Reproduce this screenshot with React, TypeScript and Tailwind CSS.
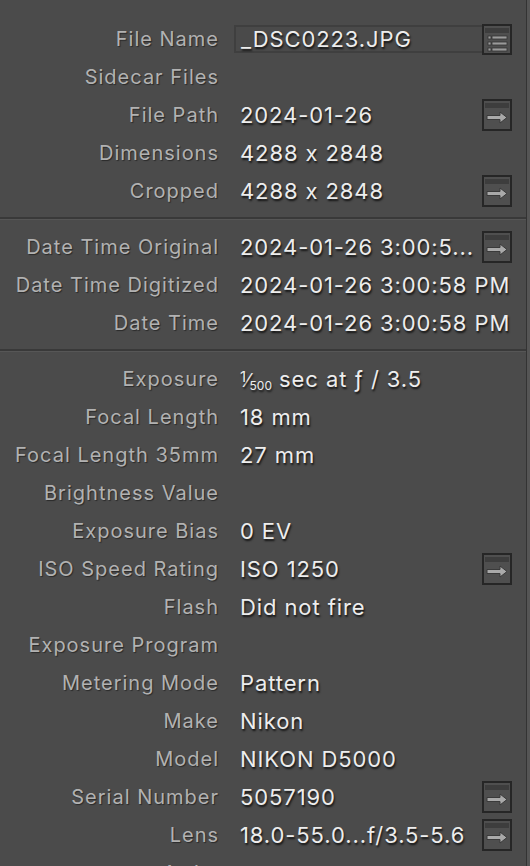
import React from "react";

const labelCls =
  "w-[219px] shrink-0 text-right text-[20px] tracking-[1px] text-[#b2b2b2] [text-shadow:1px_1px_1px_rgba(0,0,0,0.45)] whitespace-nowrap";
const valueCls =
  "ml-[21px] flex-1 min-w-0 whitespace-nowrap text-[22px] tracking-[0.9px] text-[#ededed] [text-shadow:1px_2px_2px_rgba(0,0,0,0.75)]";

function ArrowBtn() {
  return (
    <div className="w-[30px] h-[32px] shrink-0 border-2 border-[#262626] bg-[#4f4f4f] flex flex-col">
      <svg width="26" height="28" viewBox="0 0 26 28">
        <rect x="1" y="2" width="24" height="5" fill="#3d3d3d" />
        <path
          d="M3 14.5 H16 V11 L23 16.5 L16 22 V18.5 H3 Z"
          fill="#a9a9a9"
          stroke="#3a3a3a"
          strokeWidth="1"
        />
      </svg>
    </div>
  );
}

function ListBtn() {
  return (
    <div className="w-[30px] h-[31px] shrink-0 border-2 border-[#262626] bg-[#4f4f4f]">
      <svg width="26" height="27" viewBox="0 0 26 27">
        <rect x="1" y="2" width="24" height="5" fill="#3d3d3d" />
        {[10, 16, 22].map((y) => (
          <g key={y}>
            <rect x="4" y={y} width="3" height="3" fill="#9a9a9a" stroke="#333" strokeWidth="0.8" />
            <rect x="8" y={y} width="15" height="3" fill="#9a9a9a" stroke="#333" strokeWidth="0.8" />
          </g>
        ))}
      </svg>
    </div>
  );
}

function Row({
  label,
  value,
  btn,
}: {
  label: string;
  value?: React.ReactNode;
  btn?: boolean;
}) {
  return (
    <div className="flex h-[38px] items-center">
      <div className={labelCls}>{label}</div>
      <div className={valueCls}>{value}</div>
      {btn && <ArrowBtn />}
    </div>
  );
}

function Divider() {
  return (
    <div className="flex flex-col">
      <div className="h-[2px] bg-[#393939]" />
      <div className="h-[1px] bg-[#565656]" />
    </div>
  );
}

export default function App() {
  return (
    <div className="w-[530px] h-[866px] overflow-hidden bg-[#4b4b4b] flex font-['Inter','Noto_Sans',sans-serif] [font-variant-ligatures:no-contextual]">
      <div className="flex-1 flex flex-col">
        <div className="pt-[20px] pb-[7px] pr-[14px]">
          <div className="flex h-[38px] items-center">
            <div className={labelCls}>File Name</div>
            <div className="ml-[15px] flex-1 h-[28px] border-2 border-r-0 border-[#3f3f3f] bg-[#4a4a4a] flex items-center pl-[5px] text-[22px] tracking-[0.9px] text-[#ededed] [text-shadow:1px_2px_2px_rgba(0,0,0,0.75)] whitespace-nowrap">
              _DSC0223.JPG
            </div>
            <ListBtn />
          </div>
          <Row label="Sidecar Files" />
          <Row label="File Path" value="2024-01-26" btn />
          <Row label="Dimensions" value="4288 x 2848" />
          <Row label="Cropped" value="4288 x 2848" btn />
        </div>
        <Divider />
        <div className="pt-[8px] pb-[7px] pr-[14px]">
          <Row label="Date Time Original" value="2024-01-26 3:00:5..." btn />
          <Row label="Date Time Digitized" value="2024-01-26 3:00:58 PM" />
          <Row label="Date Time" value="2024-01-26 3:00:58 PM" />
        </div>
        <Divider />
        <div className="pt-[8px] pr-[14px]">
          <Row
            label="Exposure"
            value={
              <span>
                <span className="relative top-[-5px] text-[15px] tracking-normal">1</span>
                <span className="text-[18px] tracking-normal">⁄</span>
                <span className="relative top-[3px] text-[12px] tracking-normal">500</span> sec at ƒ / 3.5
              </span>
            }
          />
          <Row label="Focal Length" value="18 mm" />
          <Row label="Focal Length 35mm" value="27 mm" />
          <Row label="Brightness Value" />
          <Row label="Exposure Bias" value="0 EV" />
          <Row label="ISO Speed Rating" value="ISO 1250" btn />
          <Row label="Flash" value="Did not fire" />
          <Row label="Exposure Program" />
          <Row label="Metering Mode" value="Pattern" />
          <Row label="Make" value="Nikon" />
          <Row label="Model" value="NIKON D5000" />
          <Row label="Serial Number" value="5057190" btn />
          <Row label="Lens" value="18.0-55.0...f/3.5-5.6" btn />
          <Row label="Artist" />
        </div>
      </div>
      <div className="w-[1px] bg-[#333333]" />
      <div className="w-[3px] bg-[#555555]" />
    </div>
  );
}
